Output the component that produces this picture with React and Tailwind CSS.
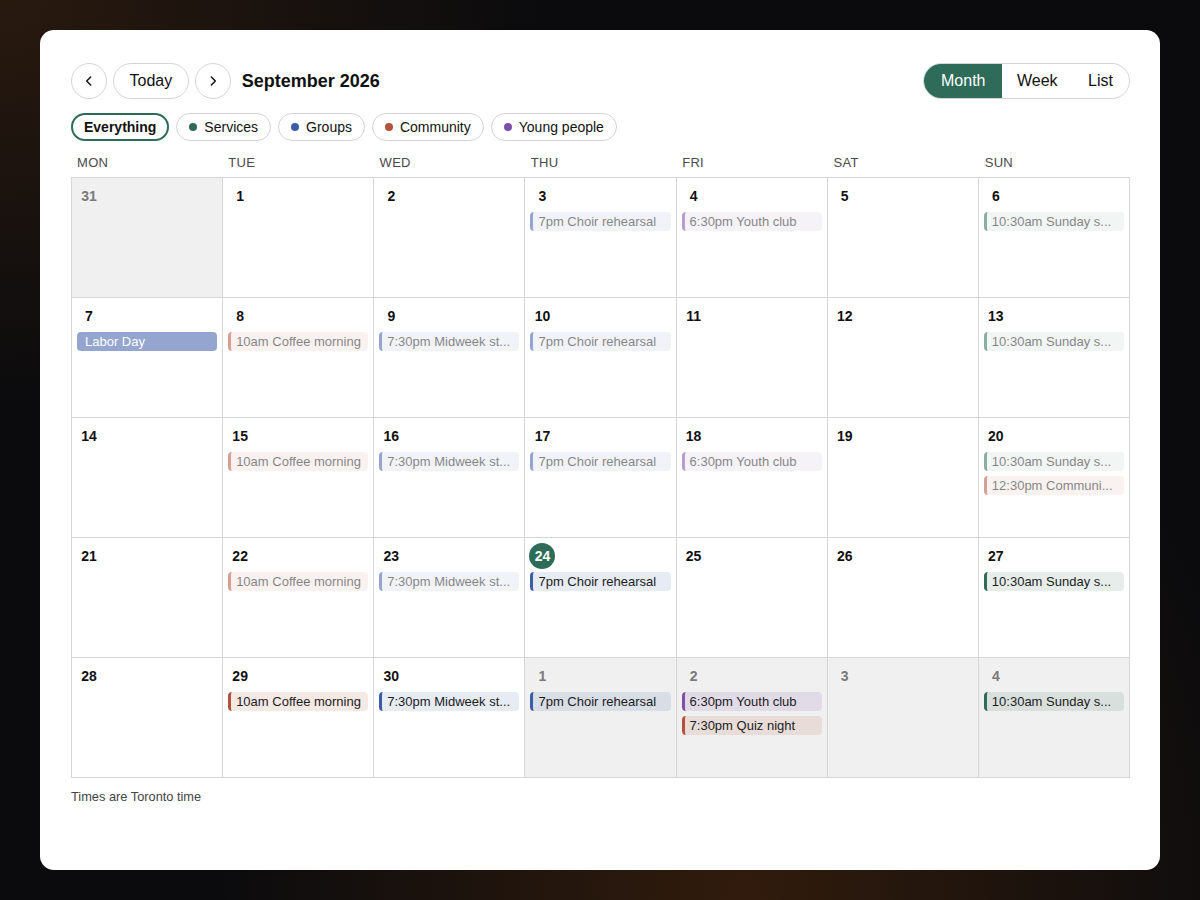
import React from "react";

const CAT = {
  services: { bar: "border-[#2e6b58]", bg: "bg-[rgba(46,107,88,0.12)]" },
  groups: { bar: "border-[#3d5ca8]", bg: "bg-[rgba(61,92,168,0.12)]" },
  community: { bar: "border-[#b5523b]", bg: "bg-[rgba(181,82,59,0.13)]" },
  young: { bar: "border-[#7d4fa8]", bg: "bg-[rgba(125,79,168,0.13)]" },
};

const E = (time, title, cat, past) => ({ time, title, cat, past });

const weeks = [
  [
    { d: 31, out: true, ev: [] },
    { d: 1, ev: [] },
    { d: 2, ev: [] },
    { d: 3, ev: [E("7pm", "Choir rehearsal", "groups", true)] },
    { d: 4, ev: [E("6:30pm", "Youth club", "young", true)] },
    { d: 5, ev: [] },
    { d: 6, ev: [E("10:30am", "Sunday s...", "services", true)] },
  ],
  [
    { d: 7, ev: [{ allDay: true, title: "Labor Day", past: true }] },
    { d: 8, ev: [E("10am", "Coffee morning", "community", true)] },
    { d: 9, ev: [E("7:30pm", "Midweek st...", "groups", true)] },
    { d: 10, ev: [E("7pm", "Choir rehearsal", "groups", true)] },
    { d: 11, ev: [] },
    { d: 12, ev: [] },
    { d: 13, ev: [E("10:30am", "Sunday s...", "services", true)] },
  ],
  [
    { d: 14, ev: [] },
    { d: 15, ev: [E("10am", "Coffee morning", "community", true)] },
    { d: 16, ev: [E("7:30pm", "Midweek st...", "groups", true)] },
    { d: 17, ev: [E("7pm", "Choir rehearsal", "groups", true)] },
    { d: 18, ev: [E("6:30pm", "Youth club", "young", true)] },
    { d: 19, ev: [] },
    {
      d: 20,
      ev: [
        E("10:30am", "Sunday s...", "services", true),
        E("12:30pm", "Communi...", "community", true),
      ],
    },
  ],
  [
    { d: 21, ev: [] },
    { d: 22, ev: [E("10am", "Coffee morning", "community", true)] },
    { d: 23, ev: [E("7:30pm", "Midweek st...", "groups", true)] },
    { d: 24, today: true, ev: [E("7pm", "Choir rehearsal", "groups", false)] },
    { d: 25, ev: [] },
    { d: 26, ev: [] },
    { d: 27, ev: [E("10:30am", "Sunday s...", "services", false)] },
  ],
  [
    { d: 28, ev: [] },
    { d: 29, ev: [E("10am", "Coffee morning", "community", false)] },
    { d: 30, ev: [E("7:30pm", "Midweek st...", "groups", false)] },
    { d: 1, out: true, ev: [E("7pm", "Choir rehearsal", "groups", false)] },
    {
      d: 2,
      out: true,
      ev: [
        E("6:30pm", "Youth club", "young", false),
        E("7:30pm", "Quiz night", "community", false),
      ],
    },
    { d: 3, out: true, ev: [] },
    { d: 4, out: true, ev: [E("10:30am", "Sunday s...", "services", false)] },
  ],
];

const days = ["MON", "TUE", "WED", "THU", "FRI", "SAT", "SUN"];

function Chevron({ dir }) {
  return (
    <svg width="16" height="16" viewBox="0 0 24 24" fill="none" stroke="#111" strokeWidth="2.2" strokeLinecap="round" strokeLinejoin="round">
      {dir === "left" ? <path d="M14.5 6l-6 6 6 6" /> : <path d="M9.5 6l6 6-6 6" />}
    </svg>
  );
}

function Event({ ev }) {
  if (ev.allDay) {
    return (
      <div className={"h-[19px] rounded-[4px] bg-[#3d5ca8] text-white pl-[8px] pr-[4px] text-[13px] leading-[19px] whitespace-nowrap overflow-hidden " + (ev.past ? "opacity-55" : "")}>
        {ev.title}
      </div>
    );
  }
  const c = CAT[ev.cat];
  return (
    <div
      className={
        "h-[19px] rounded-[4px] border-l-[3px] pl-[5px] pr-[2px] text-[13px] leading-[19px] text-[#1c1c1c] whitespace-nowrap overflow-hidden " +
        c.bar +
        " " +
        c.bg +
        " " +
        (ev.past ? "opacity-55" : "")
      }
    >
      {ev.time} {ev.title}
    </div>
  );
}

function Cell({ cell }) {
  return (
    <div className={"h-[120px] border-r border-b border-[#d6d6d6] flex flex-col min-w-0 " + (cell.out ? "bg-[#f0f0f0]" : "bg-white")}>
      <div className="mt-[5px] ml-[4px] flex">
        {cell.today ? (
          <div className="h-[26px] w-[26px] rounded-full bg-[#2e6b58] text-white text-[14px] font-bold flex items-center justify-center">
            {cell.d}
          </div>
        ) : (
          <div className={"h-[26px] min-w-[26px] flex items-center justify-center text-[14px] font-bold " + (cell.out ? "text-[#7a7a7a]" : "text-[#111]")}>
            {cell.d}
          </div>
        )}
      </div>
      <div className="mt-[3px] mx-[5px] flex flex-col gap-[5px] min-w-0">
        {cell.ev.map((ev, i) => (
          <Event key={i} ev={ev} />
        ))}
      </div>
    </div>
  );
}

function Chip({ label, dot, active }) {
  if (active) {
    return (
      <div className="h-7 px-[11px] rounded-full border-2 border-[#2e6b58] flex items-center text-[14px] font-bold text-[#111]">
        {label}
      </div>
    );
  }
  return (
    <div className="h-7 px-3 rounded-full border border-[#d4d4d4] flex items-center gap-[7px] text-[14px] text-[#111]">
      <span className={"w-2 h-2 rounded-full " + dot} />
      {label}
    </div>
  );
}

export default function App() {
  return (
    <div
      className="w-full min-h-[900px] py-[30px] bg-[#0b0b0d] bg-[radial-gradient(ellipse_at_0%_0%,rgba(60,35,16,0.6),transparent_32%),radial-gradient(ellipse_at_62%_100%,rgba(62,33,12,0.75),transparent_50%)]"
      style={{ fontFamily: '"Liberation Sans", Arial, sans-serif' }}
    >
      <div className="w-[1120px] h-[840px] mx-auto bg-white rounded-[14px] pl-[31px] pr-[30px] pt-[33px]">
        <div className="flex items-center justify-between h-9">
          <div className="flex items-center gap-1.5">
            <button className="w-9 h-9 rounded-full border border-[#d4d4d4] flex items-center justify-center bg-white">
              <Chevron dir="left" />
            </button>
            <button className="h-9 px-[15.5px] rounded-full border border-[#d4d4d4] text-[16px] text-[#111] bg-white">Today</button>
            <button className="w-9 h-9 rounded-full border border-[#d4d4d4] flex items-center justify-center bg-white">
              <Chevron dir="right" />
            </button>
            <div className="ml-[5px] text-[18px] font-bold text-[#111]">September 2026</div>
          </div>
          <div className="flex h-9 rounded-full border border-[#d4d4d4] overflow-hidden text-[16px]">
            <div className="px-[17px] flex items-center bg-[#2e6b58] text-white">Month</div>
            <div className="px-[14.5px] flex items-center text-[#111]">Week</div>
            <div className="px-4 flex items-center text-[#111]">List</div>
          </div>
        </div>

        <div className="mt-[14px] flex gap-[7px]">
          <Chip label="Everything" active />
          <Chip label="Services" dot="bg-[#2e6b58]" />
          <Chip label="Groups" dot="bg-[#3d5ca8]" />
          <Chip label="Community" dot="bg-[#b5523b]" />
          <Chip label="Young people" dot="bg-[#7d4fa8]" />
        </div>

        <div className="mt-[14px] grid grid-cols-7 h-4">
          {days.map((d) => (
            <div key={d} className="pl-[6px] text-[13px] leading-4 text-[#4a4a4a] tracking-[0.3px]">
              {d}
            </div>
          ))}
        </div>

        <div className="mt-[6px] grid grid-cols-7 border-l border-t border-[#d6d6d6]">
          {weeks.flat().map((cell, i) => (
            <Cell key={i} cell={cell} />
          ))}
        </div>

        <div className="mt-[11px] text-[12.8px] leading-4 text-[#444]">Times are Toronto time</div>
      </div>
    </div>
  );
}
